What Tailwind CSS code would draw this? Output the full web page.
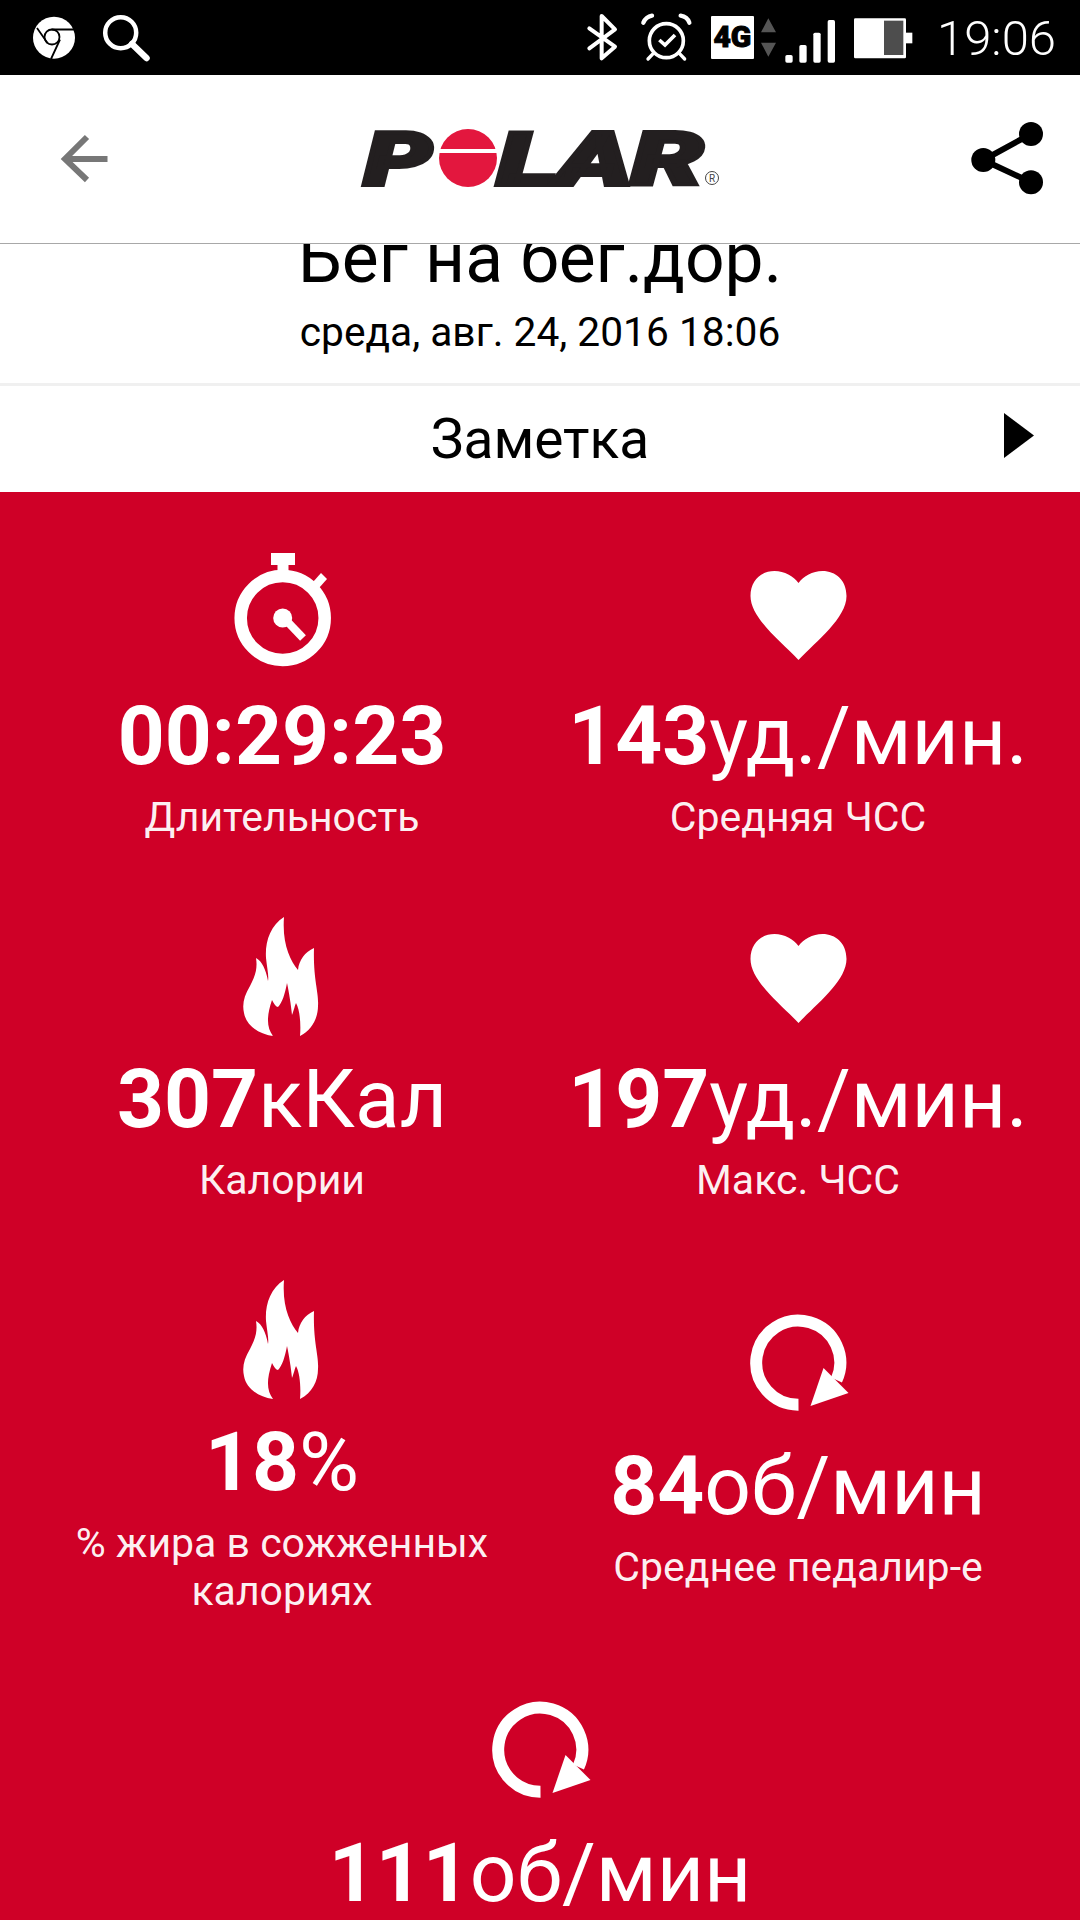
<!DOCTYPE html>
<html lang="ru">
<head>
<meta charset="utf-8">
<script src="https://cdn.jsdelivr.net/npm/@tailwindcss/browser@4"></script>
</head>
<body class="bg-white">
<div class="w-[1080px] h-[1920px] overflow-hidden flex flex-col font-[Roboto,sans-serif] text-black">
  <!-- status bar -->
  <div class="h-[75px] shrink-0 bg-black flex justify-between text-white">
    <svg class="w-[300px] h-[75px]" viewBox="0 0 300 75">
      <circle cx="54" cy="37.7" r="21" fill="#fff"/>
      <g fill="none" stroke="#000" stroke-width="1.8">
        <circle cx="52" cy="37" r="7.5"/>
        <path d="M51.5 29.500H74M37 28l10.500 15M60 39.500 51 59"/>
      </g>
      <circle cx="120.7" cy="32.7" r="15.5" fill="none" stroke="#fff" stroke-width="4.5"/>
      <path d="M132 44 146.500 58" stroke="#fff" stroke-width="6.5" stroke-linecap="round"/>
    </svg>
    <div class="flex w-[520px]">
      <svg class="w-[380px] h-[75px] shrink-0" viewBox="0 0 1140 225">
        <path d="M88 85 165 140 125 175V48L165 88 88 145" fill="none" stroke="#fff" stroke-width="12" stroke-linejoin="round" stroke-linecap="round"/>
        <circle cx="319" cy="122" r="51" fill="none" stroke="#fff" stroke-width="11"/>
        <path d="M250 68 Q258 50 276 47M362 47Q382 50 388 68" fill="none" stroke="#fff" stroke-width="13" stroke-linecap="round"/>
        <path d="M264 177 280 160M374 177 358 160" stroke="#fff" stroke-width="10" stroke-linecap="round"/>
        <path d="M298 120 315 135 345 105" fill="none" stroke="#fff" stroke-width="11"/>
        <rect x="453" y="48" width="129" height="129" rx="3" fill="#fff"/>
        <text x="517" y="142" text-anchor="middle" font-family="Roboto" font-weight="900" font-size="90" fill="#000" stroke="#000" stroke-width="3">4G</text>
        <path d="M625 55 648 97H603ZM603 128H648L625 170Z" fill="#555"/>
        <rect x="676" y="165" width="22" height="23" rx="5" fill="#fff"/>
        <rect x="718" y="135" width="22" height="53" rx="5" fill="#fff"/>
        <rect x="760" y="98" width="22" height="90" rx="5" fill="#fff"/>
        <rect x="803" y="60" width="22" height="128" rx="5" fill="#fff"/>
        <rect x="882" y="55" width="156" height="120" rx="4" fill="#fff"/>
        <rect x="972" y="62" width="58" height="103" fill="#4d4d4d"/>
        <rect x="1038" y="98" width="19" height="32" fill="#fff"/>
      </svg>
      <span class="text-[49px] leading-[77px] font-light ml-[-3px]">19:06</span>
    </div>
  </div>

  <!-- header -->
  <div class="h-[169px] shrink-0 border-b border-[#a8a8a8] flex justify-between bg-white">
    <svg class="w-[130px] h-[168px]" viewBox="0 75 130 168">
      <path d="M107.5 159H64M87 137 65 159 87 180" fill="none" stroke="#777" stroke-width="6"/>
    </svg>
    <svg class="w-[400px] h-[168px]" viewBox="340 75 400 168">
      <g font-family="Roboto" font-weight="900" font-style="italic" font-size="74" fill="#231f20" stroke="#231f20" stroke-width="4">
        <text transform="translate(364 185) scale(1.45 1)">P</text>
        <text transform="translate(497 185) scale(1.55 1)" letter-spacing="-1">LAR</text>
      </g>
      <circle cx="468" cy="158" r="29" fill="#e3173e"/>
      <rect x="436" y="149" width="64" height="4" fill="#fff"/>
      <circle cx="712" cy="178" r="6.5" fill="none" stroke="#444" stroke-width="1"/>
      <text x="712" y="181.500" text-anchor="middle" font-family="Roboto" font-size="10" fill="#444">R</text>
    </svg>
    <svg class="w-[130px] h-[168px]" viewBox="950 75 130 168">
      <path d="M1031 134 983.3 160 1031 182.3" fill="none" stroke="#000" stroke-width="6"/>
      <circle cx="1031" cy="134" r="12"/>
      <circle cx="983.3" cy="160" r="12"/>
      <circle cx="1031" cy="182.3" r="12"/>
    </svg>
  </div>

  <!-- title -->
  <div class="h-[139px] shrink-0 overflow-hidden flex flex-col items-center">
    <div class="text-[69.5px] leading-[72px] mt-[-21px] whitespace-nowrap">Бег на бег.дор.</div>
    <div class="text-[40.7px] leading-[48px] mt-[13px] whitespace-nowrap">среда, авг. 24, 2016 18:06</div>
  </div>
  <div class="h-[3px] shrink-0 bg-[#f0f0f0]"></div>

  <!-- note row -->
  <div class="h-[106px] shrink-0 flex items-center justify-between">
    <div class="w-[120px]"></div>
    <div class="text-[55px] leading-[60px]">Заметка</div>
    <div class="w-[120px] flex justify-end pr-[46px]">
      <svg class="w-[30px] h-[45px] mt-[-7px]" viewBox="0 0 30 45"><path d="M0 0 30 22.5 0 45Z"/></svg>
    </div>
  </div>

  <!-- stats -->
  <div class="flex-1 bg-[#cf0027] text-white pt-[48px]">
    <div class="grid grid-cols-2 gap-y-[62px] px-6 items-center">
      <div class="flex flex-col items-center">
        <svg class="w-[140px] h-[150px]" viewBox="0 0 140 150" fill="#fff">
          <rect x="59" y="13" width="24" height="12"/>
          <rect x="65.500" y="24" width="11" height="12"/>
          <path d="M101 42 109 33 115 39 107 48Z"/>
          <circle cx="70.700" cy="78" r="42" fill="none" stroke="#fff" stroke-width="12.500"/>
          <circle cx="70.700" cy="78" r="9.500"/>
          <path d="M70 76 91 98" stroke="#fff" stroke-width="8"/>
        </svg>
        <div class="text-[82px] leading-[96px] mt-[-2px] whitespace-nowrap"><span class="font-bold">00:29:23</span></div>
        <div class="text-[41px] leading-[48px] mt-[9px] text-white/95">Длительность</div>
      </div>
      <div class="flex flex-col items-center">
        <svg class="w-[140px] h-[150px]" viewBox="-2.500 -10 140 150" fill="#fff">
          <path d="M68 110C50 91 20 68 20 46 20 30 31 21 44 21 54 21 63 26 68 33 73 26 82 21 92 21 105 21 116 30 116 46 116 68 86 91 68 110Z"/>
        </svg>
        <div class="text-[82px] leading-[96px] mt-[-2px] whitespace-nowrap"><span class="font-bold">143</span>уд./мин.</div>
        <div class="text-[41px] leading-[48px] mt-[9px] text-white/95">Средняя ЧСС</div>
      </div>

      <div class="flex flex-col items-center">
        <svg class="w-[140px] h-[150px]" viewBox="-8 3 140 150" fill="#fff">
          <path d="M64 17C50 26 45 42 46 58 47 68 49 76 48 81 46 70 42 61 36 58 38 70 34 78 30 86 24 96 22 104 24 113 26 125 38 134 53 136 47 128 46 118 52 100 54 104 56 107 58 107 62 103 65 94 67 83 69 92 71 105 72 115 74 110 75 105 76 103 80 110 81 125 80 136 92 130 98 118 98 106 99 92 93 80 94 48 85 52 79 60 78 70 70 60 62 44 64 17Z"/>
        </svg>
        <div class="text-[82px] leading-[96px] mt-[-2px] whitespace-nowrap"><span class="font-bold">307</span>кКал</div>
        <div class="text-[41px] leading-[48px] mt-[9px] text-white/95">Калории</div>
      </div>
      <div class="flex flex-col items-center">
        <svg class="w-[140px] h-[150px]" viewBox="-2.500 -10 140 150" fill="#fff">
          <path d="M68 110C50 91 20 68 20 46 20 30 31 21 44 21 54 21 63 26 68 33 73 26 82 21 92 21 105 21 116 30 116 46 116 68 86 91 68 110Z"/>
        </svg>
        <div class="text-[82px] leading-[96px] mt-[-2px] whitespace-nowrap"><span class="font-bold">197</span>уд./мин.</div>
        <div class="text-[41px] leading-[48px] mt-[9px] text-white/95">Макс. ЧСС</div>
      </div>

      <div class="flex flex-col items-center">
        <svg class="w-[140px] h-[150px]" viewBox="-8 3 140 150" fill="#fff">
          <path d="M64 17C50 26 45 42 46 58 47 68 49 76 48 81 46 70 42 61 36 58 38 70 34 78 30 86 24 96 22 104 24 113 26 125 38 134 53 136 47 128 46 118 52 100 54 104 56 107 58 107 62 103 65 94 67 83 69 92 71 105 72 115 74 110 75 105 76 103 80 110 81 125 80 136 92 130 98 118 98 106 99 92 93 80 94 48 85 52 79 60 78 70 70 60 62 44 64 17Z"/>
        </svg>
        <div class="text-[82px] leading-[96px] mt-[-2px] whitespace-nowrap"><span class="font-bold">18</span>%</div>
        <div class="text-[41px] leading-[48px] mt-[9px] text-white/95 text-center w-[500px]">% жира в сожженных калориях</div>
      </div>
      <div class="flex flex-col items-center">
        <svg class="w-[140px] h-[150px]" viewBox="-2.500 -10 140 150">
          <path d="M68 104.700A42 42 0 1 1 106 80" fill="none" stroke="#fff" stroke-width="12"/>
          <path d="M80 106 93 68 118 93Z" fill="#fff"/>
        </svg>
        <div class="text-[82px] leading-[96px] mt-[-2px] whitespace-nowrap"><span class="font-bold">84</span>об/мин</div>
        <div class="text-[41px] leading-[48px] mt-[9px] text-white/95">Среднее педалир-е</div>
      </div>

      <div class="col-span-2 flex flex-col items-center">
        <svg class="w-[140px] h-[150px]" viewBox="-2.500 -10 140 150">
          <path d="M68 104.700A42 42 0 1 1 106 80" fill="none" stroke="#fff" stroke-width="12"/>
          <path d="M80 106 93 68 118 93Z" fill="#fff"/>
        </svg>
        <div class="text-[82px] leading-[96px] mt-[-2px] whitespace-nowrap"><span class="font-bold">111</span>об/мин</div>
      </div>
    </div>
  </div>
</div>
</body>
</html>
